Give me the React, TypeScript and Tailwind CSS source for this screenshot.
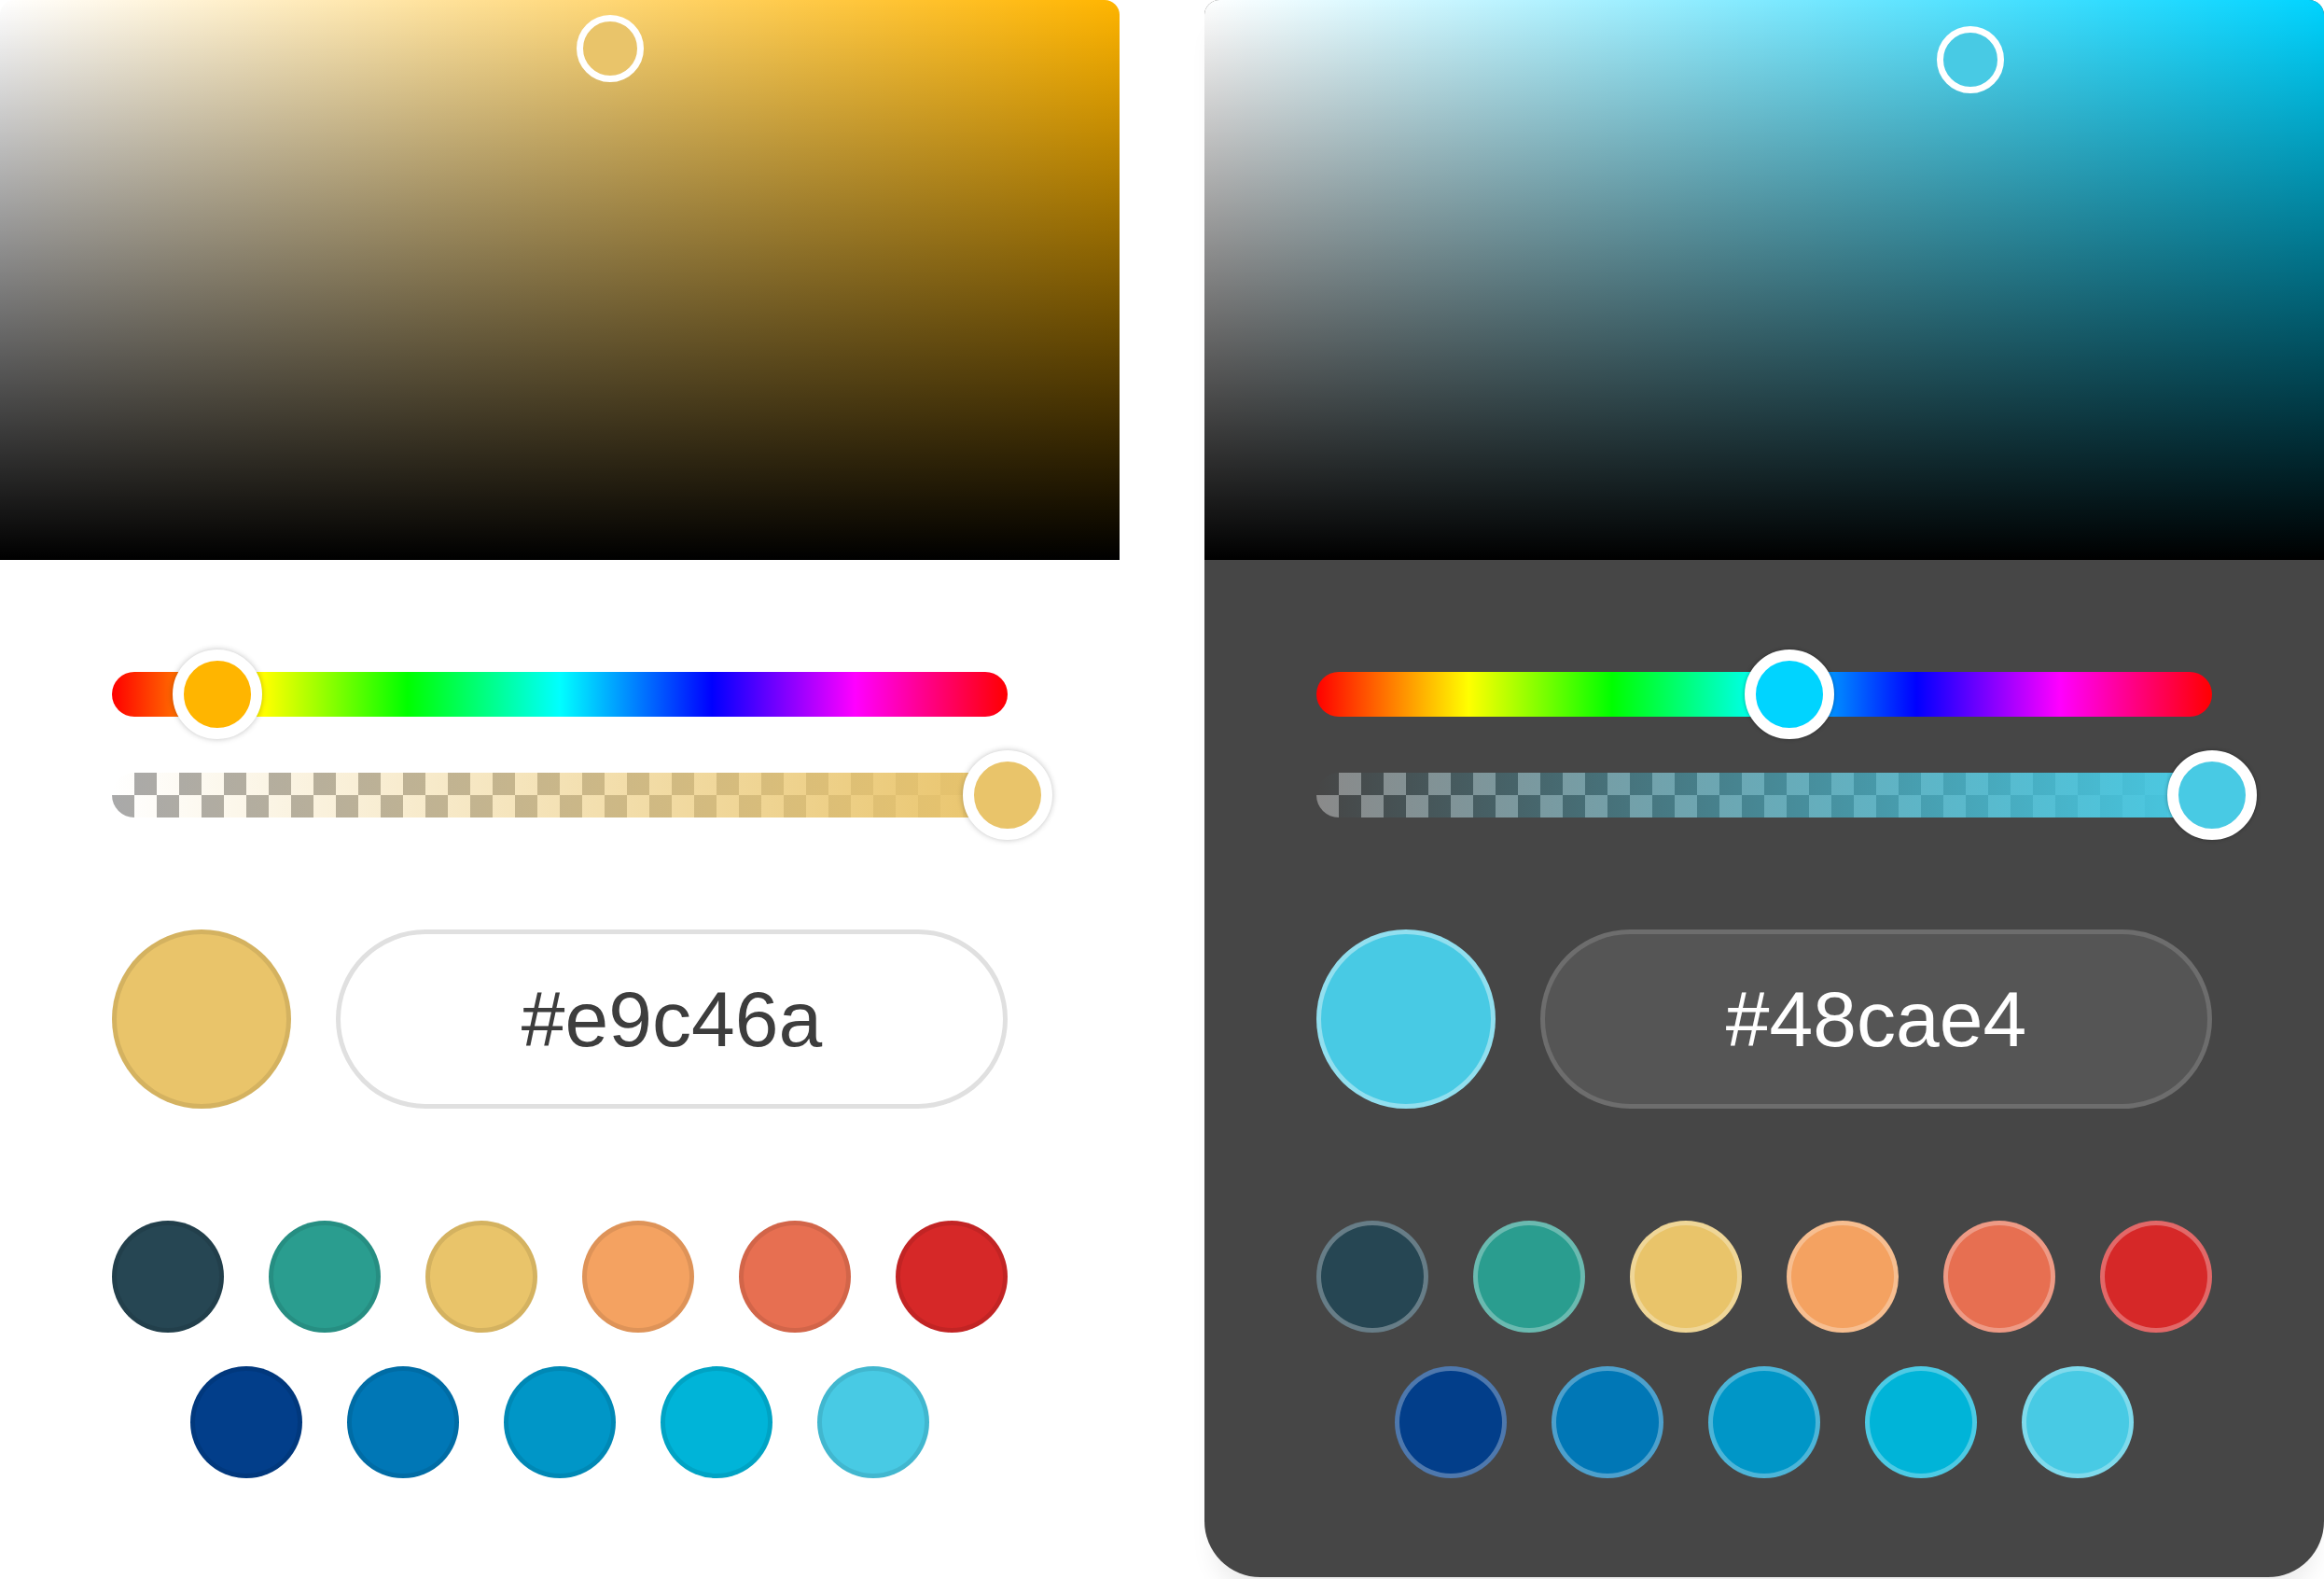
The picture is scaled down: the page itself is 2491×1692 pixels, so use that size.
import React from "react";

type Theme = {
  panel: string;
  thumb: string;
  checker: string;
  inputBox: string;
  previewRing: string;
  swatchRing: string;
};

const LIGHT: Theme = {
  panel: "bg-white",
  thumb: "border-white shadow-[0_0_6px_rgba(0,0,0,0.25)]",
  checker:
    "bg-[repeating-conic-gradient(#a9a9a9_0_25%,transparent_0_50%)] bg-[length:48px_48px]",
  inputBox: "bg-white border-[#e0e0e0] text-[#3d3d3d]",
  previewRing: "border-[rgba(0,0,0,0.09)]",
  swatchRing: "border-[rgba(0,0,0,0.09)]",
};

const DARK: Theme = {
  panel: "bg-[#464646] shadow-[0_26px_26px_-10px_rgba(0,0,0,0.08)]",
  thumb: "border-white shadow-[0_0_4px_rgba(0,0,0,0.35)]",
  checker:
    "bg-[repeating-conic-gradient(#8a8a8a_0_25%,transparent_0_50%)] bg-[length:48px_48px]",
  inputBox: "bg-[#555555] border-[#6d6d6d] text-white",
  previewRing: "border-[rgba(255,255,255,0.4)]",
  swatchRing: "border-[rgba(255,255,255,0.3)]",
};

const PRESETS = [
  "#264653",
  "#2a9d8f",
  "#e9c46a",
  "#f4a261",
  "#e76f51",
  "#d62828",
  "#023e8a",
  "#0077b6",
  "#0096c7",
  "#00b4d8",
  "#48cae4",
];

function hexToHsv(hex: string) {
  const n = parseInt(hex.slice(1), 16);
  const r = ((n >> 16) & 255) / 255;
  const g = ((n >> 8) & 255) / 255;
  const b = (n & 255) / 255;
  const max = Math.max(r, g, b);
  const min = Math.min(r, g, b);
  const d = max - min;
  let h = 0;
  if (d !== 0) {
    if (max === r) h = ((g - b) / d) % 6;
    else if (max === g) h = (b - r) / d + 2;
    else h = (r - g) / d + 4;
    h *= 60;
    if (h < 0) h += 360;
  }
  return { h, s: max === 0 ? 0 : d / max, v: max };
}

function hueToHex(h: number) {
  const f = (k: number) => {
    const x = (k + h / 60) % 6;
    const c = 1 - Math.max(0, Math.min(x, 4 - x, 1));
    return Math.round(c * 255)
      .toString(16)
      .padStart(2, "0");
  };
  return `#${f(5)}${f(3)}${f(1)}`;
}

const TRACK_W = 960;

function Picker({ color, theme }: { color: string; theme: Theme }) {
  const { h, s, v } = hexToHsv(color);
  const hue = hueToHex(h);

  return (
    <div
      className={`flex h-[1690px] w-[1200px] shrink-0 flex-col rounded-t-[16px] rounded-b-[60px] ${theme.panel}`}
    >
      {/* saturation / value area */}
      <div
        className="relative h-[600px] w-full rounded-t-[16px]"
        style={{
          background: `linear-gradient(to top, #000, rgba(0,0,0,0)), linear-gradient(to right, #fff, rgba(255,255,255,0)), ${hue}`,
        }}
      >
        <div
          className="absolute size-[72px] -translate-x-1/2 -translate-y-1/2 rounded-full border-[7px] border-white"
          style={{ left: `${s * 100}%`, top: `${(1 - v) * 100}%`, background: color }}
        />
      </div>

      <div className="flex flex-col px-[120px] pt-[120px]">
        {/* hue slider */}
        <div className="relative h-[48px] w-[960px] rounded-full bg-[linear-gradient(to_right,#f00_0%,#ff0_17%,#0f0_33%,#0ff_50%,#00f_67%,#f0f_83%,#f00_100%)]">
          <div
            className={`absolute top-1/2 size-[96px] -translate-x-1/2 -translate-y-1/2 rounded-full border-[12px] ${theme.thumb}`}
            style={{ left: (h / 360) * TRACK_W, background: hue }}
          />
        </div>

        {/* alpha slider */}
        <div className={`relative mt-[60px] h-[48px] w-[960px] rounded-full ${theme.checker}`}>
          <div
            className="absolute inset-0 rounded-full"
            style={{ background: `linear-gradient(to right, ${color}00, ${color})` }}
          />
          <div
            className={`absolute top-1/2 size-[96px] -translate-x-1/2 -translate-y-1/2 rounded-full border-[12px] ${theme.thumb}`}
            style={{ left: TRACK_W, background: color }}
          />
        </div>

        {/* preview + hex field */}
        <div className="mt-[120px] flex items-center gap-[48px]">
          <div
            className={`size-[192px] shrink-0 rounded-full border-[5px] ${theme.previewRing}`}
            style={{ background: color }}
          />
          <div
            className={`flex h-[192px] w-[720px] items-center justify-center rounded-full border-[5px] font-['Liberation_Sans',Arial,sans-serif] text-[84px] leading-none ${theme.inputBox}`}
          >
            {color}
          </div>
        </div>

        {/* preset swatches */}
        <div className="mt-[120px] flex flex-col items-center gap-[36px]">
          {[PRESETS.slice(0, 6), PRESETS.slice(6)].map((row, i) => (
            <div key={i} className="flex gap-[48px]">
              {row.map((c) => (
                <div
                  key={c}
                  className={`size-[120px] rounded-full border-[5px] ${theme.swatchRing}`}
                  style={{ background: c }}
                />
              ))}
            </div>
          ))}
        </div>
      </div>
    </div>
  );
}

export default function App() {
  return (
    <div className="flex h-[1692px] w-[2491px] gap-[91px] overflow-hidden bg-white">
      <Picker color="#e9c46a" theme={LIGHT} />
      <Picker color="#48cae4" theme={DARK} />
    </div>
  );
}
